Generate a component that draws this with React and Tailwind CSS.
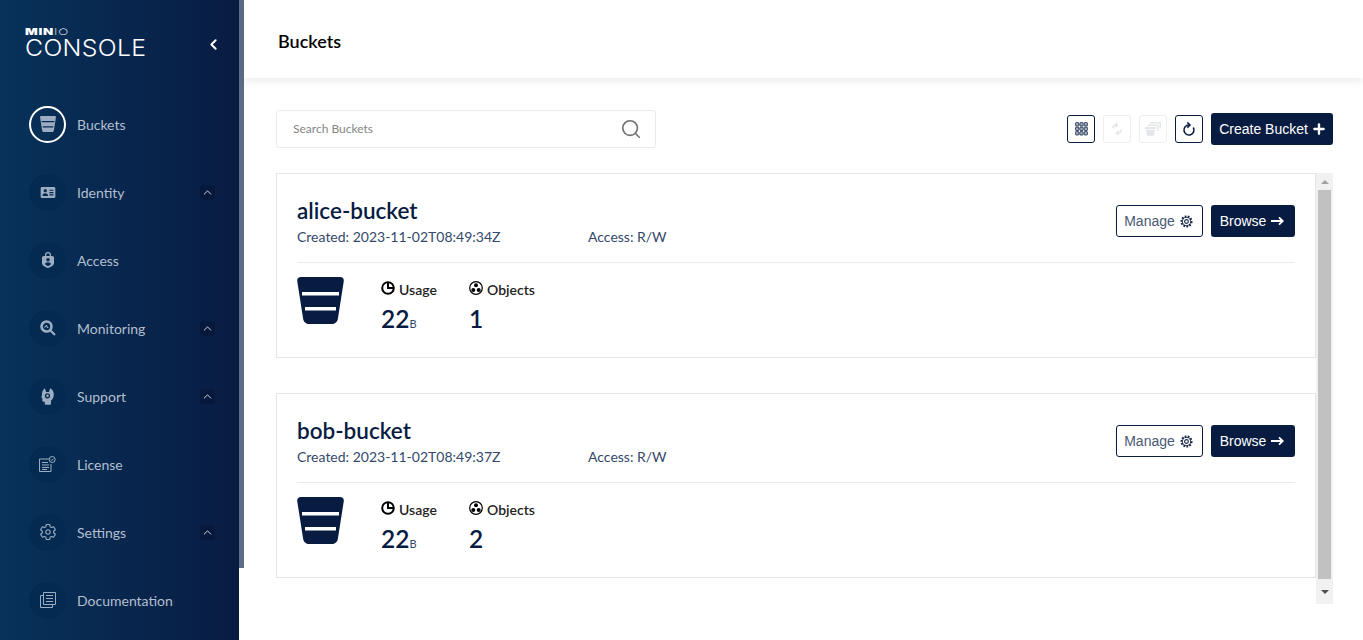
import React from 'react';
import { ChevronLeft, ChevronUp, Search, Plus } from 'lucide-react';
import { IoSettingsOutline } from 'react-icons/io5';

const navy = '#081c42';

function BucketIcon({ className, fill = 'currentColor', slot = '#fff' }) {
  return (
    <svg viewBox="0 0 47 47" className={className}>
      <path d="M4 0h39c2.500 0 4 1.500 3.800 4L41 41c-.4 3.500-2.500 6-6 6H12c-3.500 0-5.600-2.500-6-6L.2 4C0 1.500 1.500 0 4 0z" fill={fill} />
      <path d="M5 15h37v3.500H5zM8 30h31v3.500H8z" fill={slot} />
    </svg>
  );
}

function IdentityIcon() {
  return (
    <svg viewBox="0 0 16 12" className="w-[16px] h-[11px]" fill="currentColor">
      <path fillRule="evenodd" d="M1.500 0h13A1.500 1.500 0 0 1 16 1.500v9a1.500 1.500 0 0 1-1.500 1.500h-13A1.500 1.500 0 0 1 0 10.500v-9A1.500 1.500 0 0 1 1.500 0zM5 2.200a1.800 1.800 0 1 0 0 3.600 1.800 1.800 0 0 0 0-3.600zM2 9.800h6c0-2-1-3-3-3s-3 1-3 3zM9.500 3v1.200H14V3zm0 2.500v1.200H14V5.500zm0 2.500v1.200H14V8z" />
    </svg>
  );
}

function AccessIcon() {
  return (
    <svg viewBox="0 0 12 16" className="w-[12px] h-[16px]" fill="currentColor">
      <path fillRule="evenodd" d="M3 4V3a3 3 0 0 1 6 0v1h1.500A1.500 1.500 0 0 1 12 5.500V11c0 2.500-3.500 4.200-6 5-2.500-.8-6-2.500-6-5V5.500A1.500 1.500 0 0 1 1.500 4zm1.200 0h3.600V3a1.800 1.800 0 0 0-3.600 0zM6 6a1.800 1.800 0 1 0 0 3.600A1.800 1.800 0 0 0 6 6zm-3 6.300c.8.800 2 1.500 3 1.900 1-.4 2.200-1.100 3-1.900 0-1.200-1.200-2-3-2s-3 .8-3 2z" />
    </svg>
  );
}

function MonitoringIcon() {
  return (
    <svg viewBox="0 0 16 16" className="w-[16px] h-[16px]" fill="none" stroke="currentColor">
      <circle cx="6.500" cy="6.500" r="5" strokeWidth="2.600" />
      <path d="M10.500 10.500L15 15" strokeWidth="2.200" />
      <path d="M4 7h1.500l1-2 1 3 .7-1" strokeWidth="1" />
    </svg>
  );
}

// head silhouette with a headset cut-out
function SupportIcon() {
  return (
    <svg viewBox="0 0 13 17" className="w-[13px] h-[17px]" fill="currentColor">
      <path fillRule="evenodd" d="M4 .300L5 4h3L9 .300C11.500 1.300 12.800 3.500 12.800 6.500c0 2.800-1 4.800-2.800 6V15.500c0 .8-.5 1.300-1.300 1.300H5c-.8 0-1.300-.5-1.300-1.300v-1.800H2.500c-.8 0-1.200-.5-1.200-1.200V10L.200 9.300 1 7.300C.7 4 1.800 1.500 4 .300zM6.500 5.200a2.600 2.600 0 1 0 0 5.200 2.600 2.600 0 0 0 0-5.200zm0 1.300a1.300 1.300 0 1 1 0 2.600 1.300 1.300 0 0 1 0-2.600z" />
    </svg>
  );
}

function LicenseIcon() {
  return (
    <svg viewBox="0 0 17 16" className="w-[17px] h-[16px]" fill="none" stroke="currentColor" strokeWidth="1">
      <path d="M10 3H.500v12.500H12V8" />
      <path d="M3 6.500h6M3 9h7M3 11.500h7M3 13.500h5" />
      <circle cx="13.200" cy="3.500" r="3" />
      <path d="M11.800 3.500l1 1 1.600-1.800" />
    </svg>
  );
}

function DocsIcon() {
  return (
    <svg viewBox="0 0 16 16" className="w-[16px] h-[16px]" fill="none" stroke="currentColor" strokeWidth="1">
      <path d="M3.500.500h12v12h-12z" />
      <path d="M6 3.500h7M6 6.500h7M6 9.500h7" />
      <path d="M3.500 3.500h-3v12h12v-3" />
    </svg>
  );
}

function GridIcon() {
  const dots = [];
  for (let y = 0; y < 3; y++) {
    for (let x = 0; x < 3; x++) {
      dots.push(<rect key={`${x}-${y}`} x={x * 4.300 + 0.600} y={y * 4.500 + 0.600} width="3.200" height="3.400" rx="0.600" fill={navy} fillOpacity="0.350" stroke={navy} strokeOpacity="0.850" strokeWidth="0.900" />);
    }
  }
  return <svg viewBox="0 0 13 14" className="w-[13px] h-[14px]">{dots}</svg>;
}

function LifecycleIcon() {
  return (
    <svg viewBox="0 0 10 14" className="w-[10px] h-[14px]" fill="none" stroke="#e4e6ea" strokeWidth="1.600">
      <path d="M1 6c0-2 1.500-3 3.500-3M3.500 1l2 2-2 2" />
      <path d="M9 8c0 2-1.500 3-3.500 3M6.500 13l-2-2 2-2" />
    </svg>
  );
}

function MultiIcon() {
  return (
    <svg viewBox="0 0 16 14" className="w-[16px] h-[14px]" fill="#e4e6ea">
      <path d="M5 0h11v6.500h-1.500V1.500H5zM3 2.500h10.500V9H12V4H3zM0 5h11v2H0zM1 7.800h9l-1 6H2z" />
    </svg>
  );
}

function RefreshIcon() {
  return (
    <svg viewBox="0 0 14 15" className="w-[14px] h-[15px]" fill="none" stroke={navy}>
      <path d="M7 3A5 5 0 1 0 11.300 5.500" strokeWidth="1.600" />
      <path d="M5.300 0.400L8 3 5.300 5.600" strokeWidth="1.500" />
    </svg>
  );
}

function GearIcon() {
  return (
    <svg viewBox="0 0 14 14" className="w-[13px] h-[13px]" fill="none" stroke="#1c2c4c">
      <circle cx="7" cy="7" r="5.300" strokeWidth="2.400" strokeDasharray="1.900 1.300" />
      <circle cx="7" cy="7" r="4.400" strokeWidth="0.900" />
      <circle cx="7" cy="7" r="2" strokeWidth="1.200" />
    </svg>
  );
}

function PieIcon() {
  return (
    <svg viewBox="0 0 14 14" className="w-[14px] h-[14px] -translate-y-[1px]" fill="none" stroke="#000">
      <circle cx="7" cy="7" r="5.800" strokeWidth="2" />
      <path d="M7 2v5h5" strokeWidth="2" />
    </svg>
  );
}

function ObjectsIcon() {
  return (
    <svg viewBox="0 0 14 14" className="w-[14px] h-[14px] -translate-y-[1px]">
      <circle cx="7" cy="7" r="6.300" fill="none" stroke="#000" strokeWidth="1.200" />
      <circle cx="7" cy="4.300" r="2" fill="#000" />
      <circle cx="4.300" cy="9" r="2" fill="#000" />
      <circle cx="9.700" cy="9" r="2" fill="#000" />
    </svg>
  );
}

function LongArrow() {
  return (
    <svg viewBox="0 0 13 10" className="w-[13px] h-[10px]" fill="none" stroke="currentColor" strokeWidth="1.800">
      <path d="M0 5h11.500M8 1.300L11.800 5 8 8.700" />
    </svg>
  );
}

const navItems = [
  { label: 'Identity', icon: <IdentityIcon />, expand: true },
  { label: 'Access', icon: <AccessIcon /> },
  { label: 'Monitoring', icon: <MonitoringIcon />, expand: true },
  { label: 'Support', icon: <SupportIcon />, expand: true },
  { label: 'License', icon: <LicenseIcon /> },
  { label: 'Settings', icon: <IoSettingsOutline size={18} />, expand: true },
  { label: 'Documentation', icon: <DocsIcon /> },
];

function NavItem({ label, icon, expand }) {
  return (
    <div className="h-[68px] flex items-center pl-[29px]">
      <div className="w-[37px] h-[37px] rounded-full bg-[#032a50] flex items-center justify-center text-[#9cadc1]">
        {icon}
      </div>
      <span className="ml-[11px] text-[14px] text-[#b3bfcf] flex-1">{label}</span>
      {expand && (
        <div className="w-[15px] h-[15px] mr-[24px] rounded-sm bg-[#07183d] flex items-center justify-center text-white">
          <ChevronUp size={13} strokeWidth={1.500} />
        </div>
      )}
    </div>
  );
}

function Sidebar() {
  return (
    <div className="flex shrink-0 h-[640px]">
      <nav className="w-[239px] h-full bg-gradient-to-r from-[#07325a] to-[#081c42]">
        <div className="h-[90px] pl-[25px] pt-[26px] relative text-white font-['Inter',sans-serif]">
          <div className="h-[11px] leading-[11px] text-[9px] tracking-[0.500px] origin-left scale-x-[1.48]">
            <span className="font-black">MIN</span>
            <span className="font-extralight">IO</span>
          </div>
          <div className="mt-[1px] h-[20px] leading-[20px] text-[23px] font-light tracking-[0.300px] origin-left scale-x-[1.08]">CONSOLE</div>
          <ChevronLeft size={17} strokeWidth={2.800} className="absolute left-[205px] top-[36px]" />
        </div>
        <div className="h-[68px] flex items-center pl-[29px]">
          <div className="w-[37px] h-[37px] rounded-full border-2 border-white flex items-center justify-center">
            <BucketIcon className="w-[16px] h-[16px] text-[#9cadc1]" slot="#062a52" />
          </div>
          <span className="ml-[11px] text-[14px] text-[#b3bfcf]">Buckets</span>
        </div>
        {navItems.map((item) => (
          <NavItem key={item.label} {...item} />
        ))}
      </nav>
      <div className="w-[5px] h-[568px] bg-[#5d6b85]" />
    </div>
  );
}

function IconButton({ children, disabled }) {
  return (
    <div className={`w-[28px] h-[28px] rounded-[3px] border flex items-center justify-center ${disabled ? 'border-[#eceef0]' : 'border-[#081c42]'}`}>
      {children}
    </div>
  );
}

function BucketCard({ name, created, objects }) {
  return (
    <div className="h-[185px] border border-[#e5e5e5] px-[20px] pt-[23px] bg-white">
      <div className="flex justify-between h-[66px] border-b border-[#eaeaea]">
        <div>
          <div className="text-[22.500px] leading-[28px] font-semibold text-[#081c42]">{name}</div>
          <div className="flex mt-[3px] text-[14px] leading-[17px] text-[#34486b]">
            <span className="w-[291px]">Created: {created}</span>
            <span>Access: R/W</span>
          </div>
        </div>
        <div className="flex gap-[8px] mt-[8px] h-[32px] font-['Liberation_Sans',sans-serif] text-[14px]">
          <div className="w-[87px] pr-[2px] rounded-[3px] border border-[#081c42] bg-white text-[#4a5874] flex items-center justify-center gap-[5px]">
            Manage <GearIcon />
          </div>
          <div className="w-[84px] pr-[2px] rounded-[3px] bg-[#081c42] text-white flex items-center justify-center gap-[5px]">
            Browse <LongArrow />
          </div>
        </div>
      </div>
      <div className="flex pt-[14px]">
        <BucketIcon className="w-[47px] h-[47px] text-[#081c42]" slot="#fff" />
        <div className="ml-[37px] w-[88px] pt-[3px]">
          <div className="flex items-center gap-[4px] h-[18px] text-[14px] font-semibold text-[#222]">
            <PieIcon /> Usage
          </div>
          <div className="text-[#081c42] text-[24.500px] leading-[32px] mt-[5px] font-semibold">
            22<span className="text-[11px] font-normal text-[#34486b]">B</span>
          </div>
        </div>
        <div className="pt-[3px]">
          <div className="flex items-center gap-[4px] h-[18px] text-[14px] font-semibold text-[#222]">
            <ObjectsIcon /> Objects
          </div>
          <div className="text-[#081c42] text-[24.500px] leading-[32px] mt-[5px] font-semibold">{objects}</div>
        </div>
      </div>
    </div>
  );
}

function ScrollTrack() {
  return (
    <div className="w-[17px] h-[431px] bg-[#f1f1f1] flex flex-col items-center shrink-0">
      <div className="h-[17px] flex items-center justify-center">
        <div className="w-0 h-0 border-x-[4px] border-x-transparent border-b-[4px] border-b-[#a3a3a3]" />
      </div>
      <div className="w-[13px] h-[389px] bg-[#c1c1c1]" />
      <div className="h-[25px] flex items-center justify-center">
        <div className="w-0 h-0 border-x-[4px] border-x-transparent border-t-[4px] border-t-[#505050]" />
      </div>
    </div>
  );
}

export default function App() {
  return (
    <div className="flex h-[640px] w-[1363px] overflow-hidden bg-white font-['Lato',sans-serif]">
      <Sidebar />
      <main className="flex-1 min-w-0">
        <header className="h-[78px] flex items-center pl-[34px] pt-[5px] bg-white shadow-[0_3px_8px_rgba(0,0,0,0.08)] text-[18px] font-semibold text-black">
          Buckets
        </header>
        <div className="pl-[32px] pr-[30px] pt-[32px]">
          <div className="flex items-center justify-between h-[38px]">
            <div className="w-[380px] h-[38px] border border-[#eaeaea] rounded-[3px] flex items-center pl-[16px] pr-[13px] justify-between">
              <span className="text-[12px] text-[#858585]">Search Buckets</span>
              <Search size={22} strokeWidth={1.800} className="text-[#707070]" />
            </div>
            <div className="flex items-center gap-[8px]">
              <IconButton><GridIcon /></IconButton>
              <IconButton disabled><LifecycleIcon /></IconButton>
              <IconButton disabled><MultiIcon /></IconButton>
              <IconButton><RefreshIcon /></IconButton>
              <div className="w-[122px] h-[32px] pl-[2px] rounded-[3px] bg-[#081c42] text-white text-[14px] font-['Liberation_Sans',sans-serif] flex items-center justify-center gap-[3px]">
                Create Bucket <Plus size={16} strokeWidth={3.500} />
              </div>
            </div>
          </div>
          <div className="flex mt-[25px]">
            <div className="w-[1040px] flex flex-col gap-[35px]">
              <BucketCard name="alice-bucket" created="2023-11-02T08:49:34Z" objects="1" />
              <BucketCard name="bob-bucket" created="2023-11-02T08:49:37Z" objects="2" />
            </div>
            <ScrollTrack />
          </div>
        </div>
      </main>
    </div>
  );
}
